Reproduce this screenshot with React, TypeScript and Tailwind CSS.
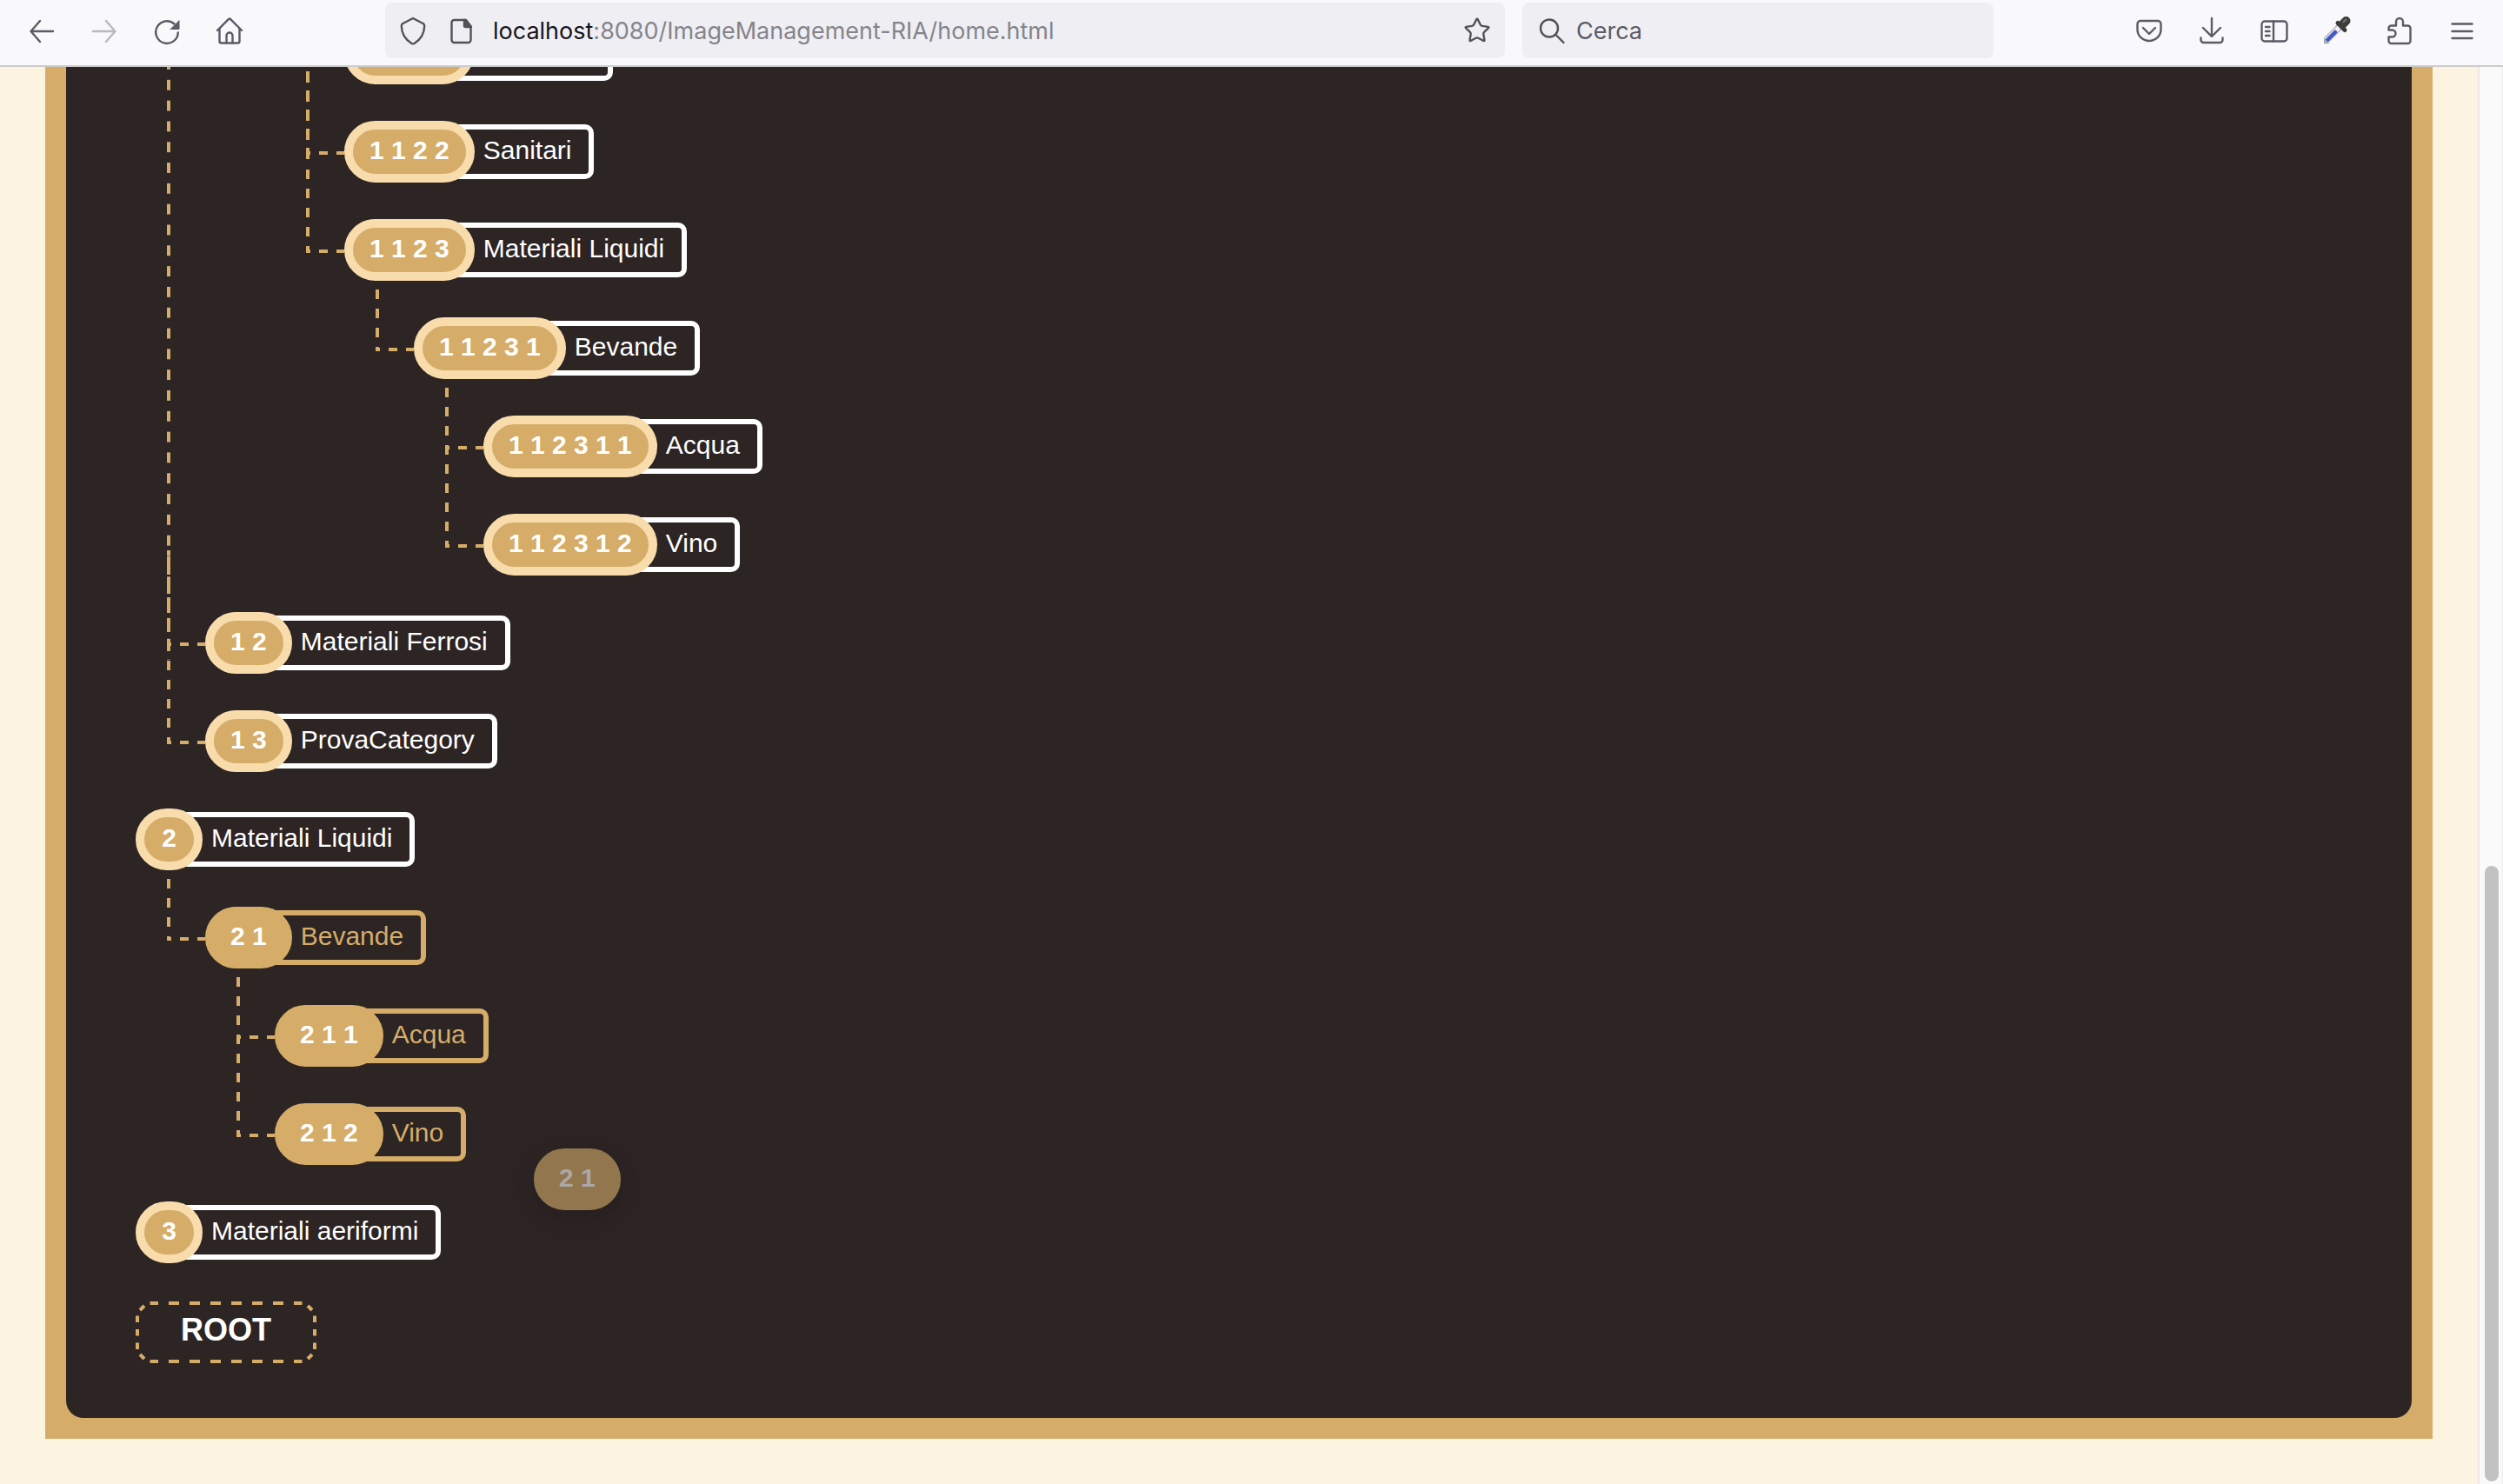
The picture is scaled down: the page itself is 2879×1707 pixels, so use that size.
import type { ReactNode } from "react";
import { Star } from "lucide-react";

type Tone = "base" | "target";

type TreeNode = {
  id: string;
  code?: string;
  name?: string;
  tone?: Tone;
  clipped?: boolean;
  line?: string;
  children?: TreeNode[];
};

const dash = "bg-[linear-gradient(#d5ad69_48%,transparent_48%)] bg-[length:4px_22px]";
const firstLine = `${dash} -top-8 h-[71px]`;
const nextLine = `${dash} top-[-79px] h-[118px]`;

const tree: TreeNode[] = [
  {
    id: "1",
    children: [
      {
        id: "1-1",
        children: [
          {
            id: "1-1-2",
            children: [
              { id: "1-1-2-1", clipped: true },
              {
                id: "1-1-2-2",
                code: "1 1 2 2",
                name: "Sanitari",
                line: "bg-[linear-gradient(#d5ad69_58%,transparent_58%)] bg-[length:4px_22px] top-[-79px] h-[123px]",
              },
              {
                id: "1-1-2-3",
                code: "1 1 2 3",
                name: "Materiali Liquidi",
                line: `${dash} top-[-57px] h-24`,
                children: [
                  {
                    id: "1-1-2-3-1",
                    code: "1 1 2 3 1",
                    name: "Bevande",
                    line: firstLine,
                    children: [
                      { id: "1-1-2-3-1-1", code: "1 1 2 3 1 1", name: "Acqua", line: firstLine },
                      { id: "1-1-2-3-1-2", code: "1 1 2 3 1 2", name: "Vino", line: nextLine },
                    ],
                  },
                ],
              },
            ],
          },
        ],
      },
      {
        id: "1-2",
        code: "1 2",
        name: "Materiali Ferrosi",
        line: "bg-[linear-gradient(#d5ad69_50%,transparent_50%)] bg-[length:4px_24px] bg-repeat-round top-[-636px] h-[691px]",
      },
      {
        id: "1-3",
        code: "1 3",
        name: "ProvaCategory",
        line: `${dash} bg-[position:0_-5px] top-[-184px] h-[223px]`,
      },
    ],
  },
  {
    id: "2",
    code: "2",
    name: "Materiali Liquidi",
    children: [
      {
        id: "2-1",
        code: "2 1",
        name: "Bevande",
        tone: "target",
        line: firstLine,
        children: [
          { id: "2-1-1", code: "2 1 1", name: "Acqua", tone: "target", line: firstLine },
          { id: "2-1-2", code: "2 1 2", name: "Vino", tone: "target", line: nextLine },
        ],
      },
    ],
  },
  { id: "3", code: "3", name: "Materiali aeriformi" },
];

function Badge({ tone = "base", children }: { tone?: Tone; children?: ReactNode }) {
  return (
    <span
      className={`relative z-10 flex h-[71px] min-w-[77px] items-center justify-center whitespace-nowrap rounded-full border-[10px] bg-[#d5ad69] px-[19px] pb-1 text-[30px] font-bold text-white ${
        tone === "target" ? "border-[#d5ad69]" : "border-[#f9dcac]"
      }`}
    >
      {children}
    </span>
  );
}

function Label({ tone = "base", children }: { tone?: Tone; children: ReactNode }) {
  return (
    <span
      className={`-ml-10 flex h-[63px] items-center whitespace-nowrap rounded-[10px] border-[6px] pr-5 pb-1 pl-11 text-[30px] ${
        tone === "target" ? "border-[#d5ad69] text-[#d5ad69]" : "border-white text-white"
      }`}
    >
      {children}
    </span>
  );
}

function Node({ node }: { node: TreeNode }) {
  const hasRow = Boolean(node.code);
  return (
    <li className="relative">
      {node.line && (
        <>
          <span className={`absolute -left-11 w-1 ${node.line}`} />
          <span className="absolute -left-11 top-[35px] h-1 w-11 bg-[linear-gradient(to_right,#d5ad69_5px,transparent_5px_15px,#d5ad69_15px)] bg-[length:20px_4px]" />
        </>
      )}
      {hasRow && (
        <div className="flex items-center">
          <Badge tone={node.tone}>{node.code}</Badge>
          <Label tone={node.tone}>{node.name}</Label>
        </div>
      )}
      {node.clipped && (
        <div className="flex items-center">
          <span className="relative z-10 h-[71px] w-[149px] rounded-full border-[10px] border-[#f9dcac] bg-[#d5ad69]" />
          <span className="-ml-10 h-[63px] w-[200px] rounded-[10px] border-[6px] border-white" />
        </div>
      )}
      {node.children && (
        <ul className={`ml-20 flex flex-col gap-[42px] ${hasRow ? "mt-[42px]" : ""}`}>
          {node.children.map((child) => (
            <Node key={child.id} node={child} />
          ))}
        </ul>
      )}
    </li>
  );
}

function Icon({ children }: { children: ReactNode }) {
  return (
    <svg
      viewBox="0 0 32 32"
      className="size-8 shrink-0 overflow-visible"
      fill="none"
      stroke="currentColor"
      strokeWidth="2.4"
      strokeLinecap="round"
      strokeLinejoin="round"
      aria-hidden="true"
    >
      {children}
    </svg>
  );
}

function Tool({ label, dim, children }: { label: string; dim?: boolean; children: ReactNode }) {
  return (
    <button type="button" aria-label={label} disabled={dim} className={dim ? "opacity-40" : ""}>
      <Icon>{children}</Icon>
    </button>
  );
}

function Toolbar() {
  return (
    <header className="flex shrink-0 items-center border-b-2 border-[#cccccc] bg-[#f9f9fb] pt-[3px] pr-[31px] pb-2 pl-8 font-[Inter,sans-serif] text-[27px] text-[#5b5b66]">
      <nav className="flex gap-10">
        <Tool label="Indietro">
          <path d="M14 5 3.5 17 14 29M3.500 17H29" />
        </Tool>
        <Tool label="Avanti" dim>
          <path d="M18 5 28.500 17 18 29M28.500 17H3" />
        </Tool>
        <Tool label="Ricarica">
          <path d="M28.800 18.500A12.800 12.800 0 1 1 24.500 8.500" />
          <path d="M30 5v9.500h-9.500z" fill="currentColor" strokeWidth="1" />
        </Tool>
        <Tool label="Home">
          <path d="M2 16 14.800 3.200a1.700 1.700 0 0 1 2.400 0L30 16" />
          <path d="M4.500 14v14.500a2 2 0 0 0 2 2h19a2 2 0 0 0 2-2V14" />
          <path d="M12.500 30.500V22a3.500 3.500 0 0 1 7 0v8.500" />
        </Tool>
      </nav>
      <div className="grow-[163] basis-0" />
      <div className="mr-5 grow-[1288] basis-0 rounded-lg bg-[#efeff3] text-[#515158]">
        <div className="flex h-16 items-center pr-4 pl-4">
          <Icon>
            <path d="M16 2 28 8.300Q29.300 9.200 29.200 11C29 20 24 27 17.500 31Q16 31.800 14.500 31C8 27 3 20 2.800 11Q2.700 9.200 4 8.300Z" />
          </Icon>
          <div className="ml-6">
            <Icon>
              <path d="M7.500 4H20.500l6 7.500V27a3 3 0 0 1-3 3H7.500a3 3 0 0 1-3-3V7a3 3 0 0 1 3-3Z" />
              <path d="M19 4v6.500a1.500 1.500 0 0 0 1.500 1.500H27L21 4Z" fill="currentColor" />
            </Icon>
          </div>
          <div
            role="textbox"
            aria-label="Indirizzo"
            contentEditable
            suppressContentEditableWarning
            className="ml-5 flex-1 whitespace-nowrap pt-[3px] text-[#85848b] outline-none"
          >
            <span className="text-[#15141a]">localhost</span>:8080/ImageManagement-RIA/home.html
          </div>
          <button type="button" aria-label="Aggiungi ai segnalibri">
            <Star className="size-8" strokeWidth={1.8} />
          </button>
        </div>
      </div>
      <label className="grow-[542] basis-0 rounded-lg bg-[#efeff3] text-[#515158]">
        <span className="flex h-16 items-center gap-3 px-[18px]">
          <Icon>
            <circle cx="13" cy="13.500" r="10" />
            <path d="m20.500 21 9 9" />
          </Icon>
          <input
            type="search"
            aria-label="Cerca"
            placeholder="Cerca"
            className="w-full min-w-0 bg-transparent pt-[3px] outline-none placeholder:text-[#5b5b66]"
          />
        </span>
      </label>
      <div className="grow-[163] basis-0" />
      <nav className="flex gap-10">
        <Tool label="Pocket">
          <path d="M6 5h20a3.500 3.500 0 0 1 3.500 3.500V15a13.500 13 0 0 1-27 0V8.500A3.500 3.500 0 0 1 6 5Z" />
          <path d="m9 13 7 7 7-7" />
        </Tool>
        <Tool label="Download">
          <path d="M16 2v20M6 13l10 10 10-10" />
          <path d="M3.500 24.500V27a3 3 0 0 0 3 3h19a3 3 0 0 0 3-3v-2.500" />
        </Tool>
        <Tool label="Barra laterale">
          <rect x="1.500" y="5.500" width="29" height="23" rx="3.500" />
          <path d="M15 5.500v23M6 12h4.500M6 17h4.500M6 22h4.500" />
        </Tool>
        <Tool label="Contagocce">
          <path d="m4 27 15-15" stroke="#b4b4b9" strokeWidth="8" strokeLinecap="butt" />
          <path d="m4 27 15-15" stroke="#f4f4f8" strokeWidth="5" strokeLinecap="butt" />
          <path d="m5 27 9-9" stroke="#4258c6" strokeWidth="4.500" />
          <path d="M1.500 30.500v-5l5 5z" fill="#a5a5aa" stroke="#a5a5aa" strokeWidth="1" />
          <path d="m17 7.500 8 8" stroke="#383838" strokeWidth="5" />
          <path d="m22.500 9 4-4" stroke="#3d3d3d" strokeWidth="10" />
          <path d="m23.500 6 3-2.500" stroke="#777777" strokeWidth="2" />
        </Tool>
        <Tool label="Estensioni">
          <path d="M12 10.500V6a4 4 0 0 1 8 0v4.500h5.500a3 3 0 0 1 3 3V28a3 3 0 0 1-3 3h-19a3 3 0 0 1-3-3v-4.500h4a4 4 0 0 0 0-8h-4v-2a3 3 0 0 1 3-3Z" />
        </Tool>
        <Tool label="Menu">
          <path d="M4.500 8.500h23M4.500 17h23M4.500 25h23" />
        </Tool>
      </nav>
    </header>
  );
}

export default function App() {
  return (
    <div className="flex h-screen flex-col overflow-hidden">
      <Toolbar />
      <div className="flex min-h-0 flex-1">
        <main className="relative flex flex-1 flex-col justify-end overflow-hidden bg-[#fdf3e1] px-[52px] pb-[52px] font-['Liberation_Sans',sans-serif] leading-none">
          <div className="bg-[#d5ad69] p-6">
            <section className="flex flex-col items-start gap-11 rounded-[20px] bg-[#2d2424] px-20 pt-20 pb-[63px]">
              <ul className="flex flex-col gap-[42px]">
                {tree.map((node) => (
                  <Node key={node.id} node={node} />
                ))}
              </ul>
              <button
                type="button"
                aria-label="ROOT"
                className="relative flex h-[71px] w-[208px] items-center justify-center pb-1.5 text-[36px] font-bold text-white"
              >
                <svg className="absolute inset-0 size-full" viewBox="0 0 208 71" fill="none" aria-hidden="true">
                  <g stroke="#d5ad69" strokeWidth="4">
                    <path d="M16.500 2H192" strokeDasharray="9.500 12 12 12 12 12 12 12 12 12 12 12 12 12 9.500 20" />
                    <path d="M16.500 69H192" strokeDasharray="9.500 12 12 12 12 12 12 12 12 12 12 12 12 12 9.500 20" />
                    <path d="M2 16.500V55M206 16.500V55" strokeDasharray="7.500 8" />
                    <path d="m5 10 5-5M203 10l-5-5M5 61l5 5M203 61l-5 5" />
                  </g>
                </svg>
                ROOT
              </button>
            </section>
          </div>
          <div className="absolute bottom-[315px] left-[614px] rounded-full opacity-60 shadow-[0_8px_36px_rgba(0,0,0,0.25)]">
            <Badge tone="target">2 1</Badge>
          </div>
        </main>
        <div className="flex w-[29px] flex-col border-r border-l-2 border-r-[#ececec] border-l-[#ebe8e6] bg-[#fafafa] pr-1 pb-[3px] pl-1.5">
          <div className="grow-[919]" />
          <div className="grow-[708] rounded-full bg-[#c2c2c2]" />
        </div>
      </div>
    </div>
  );
}
